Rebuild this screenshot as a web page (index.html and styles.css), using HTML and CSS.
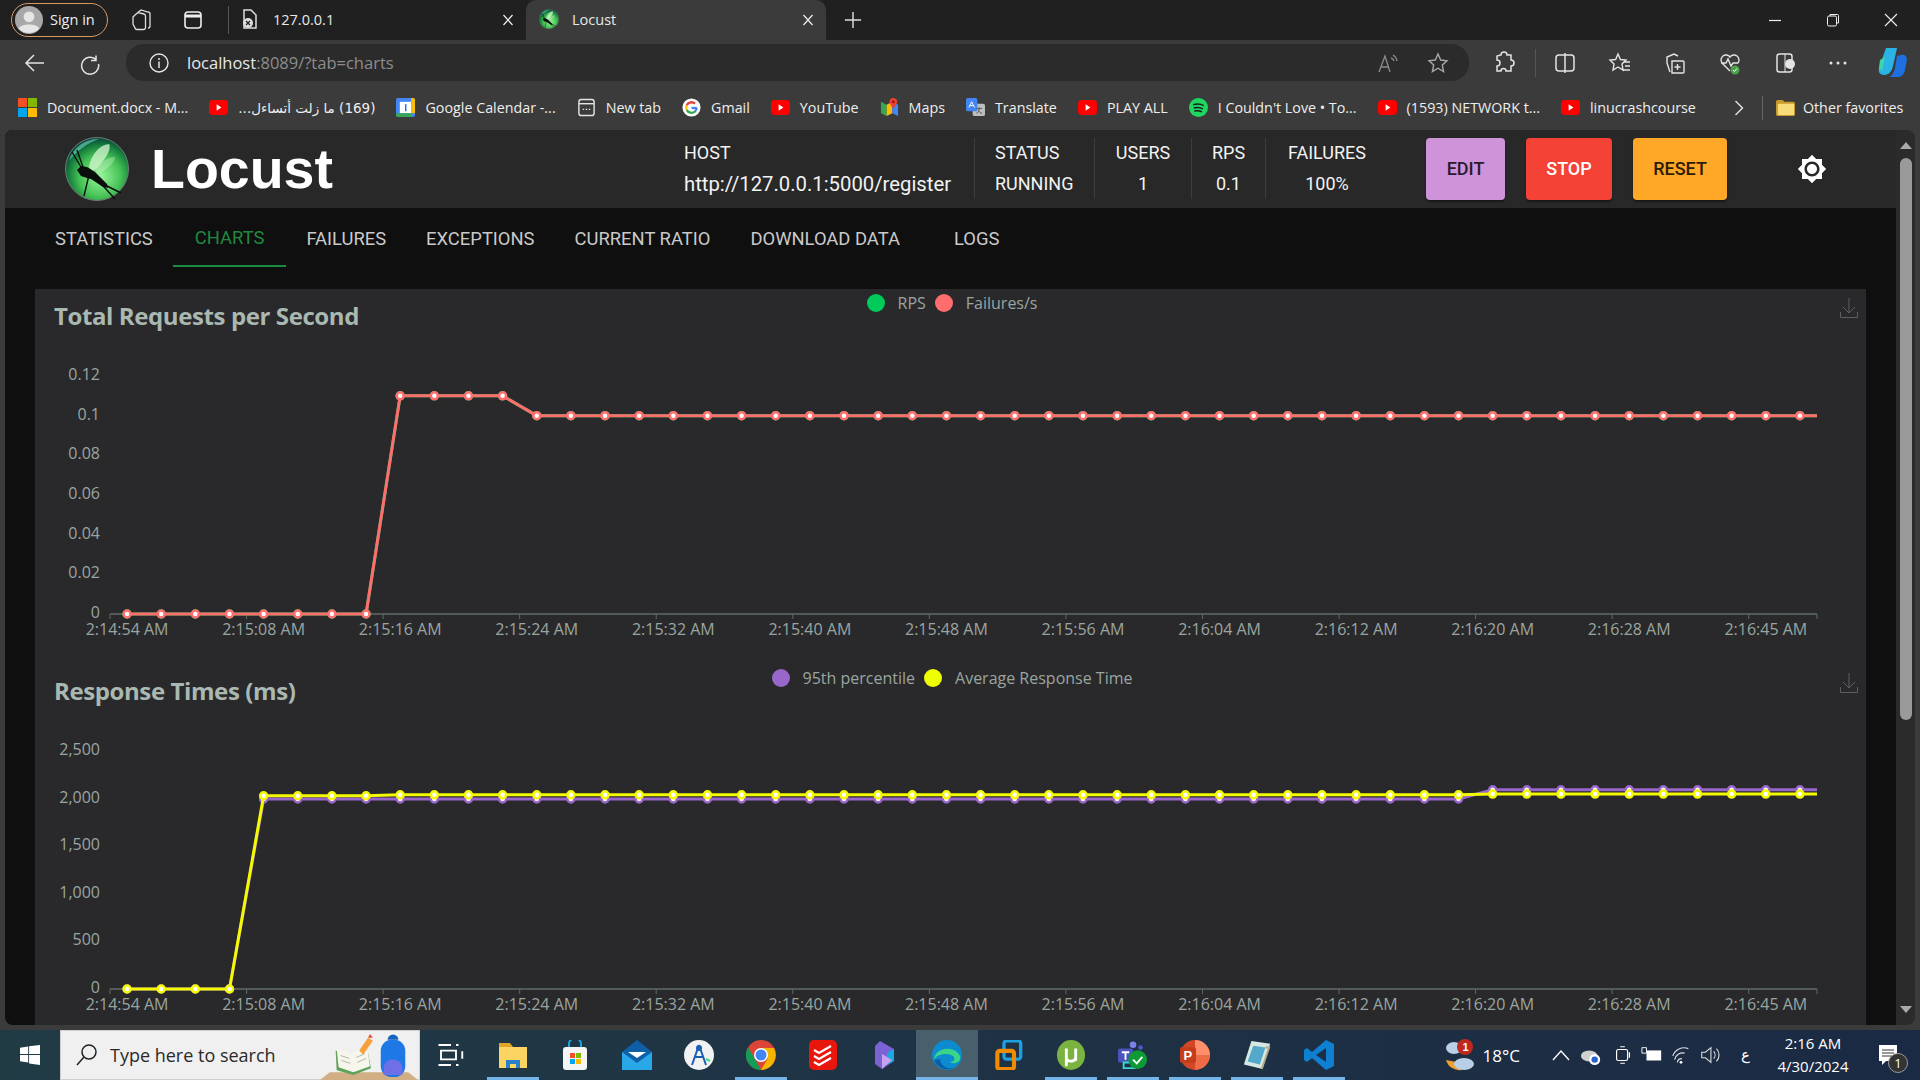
FILE: index.html
```html
<!DOCTYPE html>
<html lang="en">
<head>
    <meta charset="UTF-8">
    <title>Locust</title>
    <link rel="stylesheet" href="styles.css">
</head>
<body>
    <svg class="defs" width="0" height="0">
        <defs>
            <radialGradient id="ballGrad" cx="55%" cy="62%" r="60%">
                <stop offset="0" stop-color="#9af59a"/>
                <stop offset="0.55" stop-color="#45c255"/>
                <stop offset="0.85" stop-color="#137a3c"/>
                <stop offset="1" stop-color="#0b4a3c"/>
            </radialGradient>
        </defs>
        <symbol id="locust" viewBox="0 0 64 64">
            <circle cx="32" cy="32" r="31.5" fill="url(#ballGrad)" stroke="#6d7d78"/>
            <path d="M4 24C8 10 20 2 34 2c-12 4-22 12-30 22z" fill="#7fe3d0" opacity=".55"/>
            <path d="M24 30C26 18 34 8 44 7c3 4-4 18-16 27z" fill="#d6f5d2" opacity=".75"/>
            <path d="M30 32C36 24 44 20 50 20c0 5-8 13-17 17z" fill="#d6f5d2" opacity=".35"/>
            <path d="M12 33l4-4 6 1 8 5 12 12 1 4-5-1-12-8-4-1-6-2z" fill="#0a0f0c"/>
            <path d="M18 30L12 13M16 30L7 15M30 40l20 22M24 38l-5 21M36 46l20 10" stroke="#0a0f0c" stroke-width="1.4" fill="none"/>
        </symbol>
        <symbol id="yt" viewBox="0 0 20 20">
            <rect x="0" y="2" width="20" height="16" rx="4" fill="#f00"/>
            <path d="M8 6.500l5 3.500-5 3.500z" fill="#fff"/>
        </symbol>
        <symbol id="cross" viewBox="0 0 12 12">
            <path d="M1.500 1l9 10M10.500 1l-9 10" stroke="#eee" stroke-width="1.200"/>
        </symbol>
        <symbol id="download" viewBox="0 0 18 20">
            <path d="M.5 14v5.500h17V14M9 0v15M3 9l6 6 6-6" fill="none" stroke="#5c5f61" stroke-width="1"/>
        </symbol>
    </svg>

    <div class="tabbar">
        <div class="signin">
            <svg class="avatar" viewBox="0 0 26 26"><circle cx="13" cy="13" r="13" fill="#a8a8a8"/><circle cx="13" cy="10" r="5" fill="#e6e6e6"/><path d="M3.500 21c2-5 17-5 19 0a13 13 0 0 1-19 0z" fill="#e6e6e6"/></svg>
            <span>Sign in</span>
        </div>
        <svg class="tab-tool" viewBox="0 0 22 24"><path d="M8 4.500l3-2.500 7 2a2 2 0 0 1 2 2v12a2 2 0 0 1-2 2M5 7l3-2.500 6 1.500a2 2 0 0 1 1.500 2v12a2 2 0 0 1-2 1.500H7a2 2 0 0 1-2-1.500l-2-4V9z" fill="none" stroke="#ddd" stroke-width="1.300"/></svg>
        <svg class="tab-tool" viewBox="0 0 22 24"><rect x="3" y="4" width="16" height="16" rx="3" fill="none" stroke="#eee" stroke-width="1.600"/><path d="M3 8h16" stroke="#eee" stroke-width="3"/></svg>
        <div class="tab-sep"></div>
        <div class="tab">
            <svg class="tab-icon" viewBox="0 0 18 22"><path d="M3 2h7l5 5v13H3z" fill="none" stroke="#ddd" stroke-width="1.500"/><circle cx="7" cy="15" r="5" fill="#ddd"/><path d="M5 13l4 4M9 13l-4 4" stroke="#222" stroke-width="1.200"/></svg>
            <span class="tab-title">127.0.0.1</span>
            <svg class="tab-close"><use href="#cross"/></svg>
        </div>
        <div class="tab active">
            <svg class="tab-icon"><use href="#locust"/></svg>
            <span class="tab-title">Locust</span>
            <svg class="tab-close"><use href="#cross"/></svg>
        </div>
        <svg class="newtab" viewBox="0 0 20 20"><path d="M10 1v18M1 10h18" stroke="#ddd" stroke-width="1.600"/></svg>
        <div class="window-btns">
            <svg viewBox="0 0 14 14"><path d="M1 7.500h12" stroke="#eee" stroke-width="1.200"/></svg>
            <svg viewBox="0 0 14 14"><rect x="1.500" y="3" width="9" height="10" rx="1.500" fill="none" stroke="#eee"/><path d="M4 3V1.500h7.500a1 1 0 0 1 1 1V10H10.500" fill="none" stroke="#eee"/></svg>
            <svg viewBox="0 0 14 14"><path d="M1 1l12 12M13 1L1 13" stroke="#eee" stroke-width="1.100"/></svg>
        </div>
    </div>

    <div class="toolbar">
        <svg class="tool back" viewBox="0 0 24 24"><path d="M21 12H3M11 4l-8 8 8 8" fill="none" stroke="#e4e4e4" stroke-width="1.500"/></svg>
        <svg class="tool reload" viewBox="0 0 24 24"><path d="M18 4.500v5h-5M18.500 9A8.500 8.500 0 1 0 20.500 13" fill="none" stroke="#e4e4e4" stroke-width="1.500"/></svg>
        <div class="address">
            <svg class="tool info" viewBox="0 0 22 22"><circle cx="11" cy="11" r="9" fill="none" stroke="#e4e4e4" stroke-width="1.400"/><path d="M11 9.500V16M11 6v2" stroke="#e4e4e4" stroke-width="1.500"/></svg>
            <div class="url"><span class="url-host">localhost</span>:8089/?tab=charts</div>
            <svg class="tool read" viewBox="0 0 24 24"><path d="M3 21L9 5l5 16M5 16h7M15 7a4 4 0 0 1 3 3M17 4a8 8 0 0 1 4 6" fill="none" stroke="#8c8c8c" stroke-width="1.300"/></svg>
            <svg class="tool star" viewBox="0 0 24 24"><path d="M12 3l2.700 6 6.300.7-4.700 4.300 1.300 6.500-5.600-3.300-5.600 3.300 1.300-6.500L3 9.700 9.300 9z" fill="none" stroke="#a8a8a8" stroke-width="1.400"/></svg>
        </div>
        <svg class="tool ext" viewBox="0 0 24 24"><path d="M9 4a3 3 0 0 1 6 0h4v5a3 3 0 0 1 0 6v5h-5a2.500 2.500 0 0 0-5 0H5v-5a3 3 0 0 0 0-6V5z" fill="none" stroke="#e4e4e4" stroke-width="1.500"/></svg>
        <div class="tool-sep"></div>
        <svg class="tool split" viewBox="0 0 24 24"><rect x="3" y="4" width="18" height="16" rx="3" fill="none" stroke="#e4e4e4" stroke-width="1.500"/><path d="M12 2v20" stroke="#e4e4e4" stroke-width="1.500"/></svg>
        <svg class="tool fav" viewBox="0 0 24 24"><path d="M10 3l2.400 5.500 5.600.6-4 4 1 5.900-5-3-5 3 1-5.900-4-4 5.600-.6zM16 11h6M17 15h5M15 19h7" fill="none" stroke="#e4e4e4" stroke-width="1.400"/></svg>
        <svg class="tool coll" viewBox="0 0 24 24"><path d="M7 21l-3-9V6l7-3 4 2M9 10h11a1 1 0 0 1 1 1v10a1 1 0 0 1-1 1H9z M14.500 13v6M11.500 16h6" fill="none" stroke="#e4e4e4" stroke-width="1.400"/></svg>
        <svg class="tool health" viewBox="0 0 24 24"><path d="M12 20L4 12a5 5 0 0 1 8-6 5 5 0 0 1 8 6M3 12h5l2-4 3 7 2-3h5" fill="none" stroke="#e4e4e4" stroke-width="1.400"/><circle cx="17" cy="19" r="4.500" fill="#4aa24a"/><path d="M15 19l1.500 1.500 2.500-3" stroke="#fff" fill="none"/></svg>
        <svg class="tool side" viewBox="0 0 24 24"><rect x="4" y="3" width="15" height="18" rx="2.500" fill="none" stroke="#e4e4e4" stroke-width="1.500"/><path d="M12 3v18" stroke="#e4e4e4"/><circle cx="17" cy="13" r="5" fill="#e4e4e4"/></svg>
        <svg class="tool dots" viewBox="0 0 24 24"><circle cx="5" cy="12" r="1.500" fill="#e4e4e4"/><circle cx="12" cy="12" r="1.500" fill="#e4e4e4"/><circle cx="19" cy="12" r="1.500" fill="#e4e4e4"/></svg>
        <svg class="tool copilot" viewBox="0 0 30 34"><path d="M9 2h11l-4 18c-1 5-4 9-9 9-4 0-6-3-5-7z" fill="#2cb3e6"/><path d="M12 31h9c4 0 6-3 7-7l2-11c0-3-3-5-6-4l-4 1-2 12c-1 4-3 8-6 9z" fill="#1f6fe0"/><path d="M3 14l5-3-3 14-3-3z" fill="#3dd6a8"/></svg>
    </div>

    <div class="bookmarks">
        <div class="bm"><svg class="bm-icon" viewBox="0 0 20 20"><rect width="9.500" height="9.500" fill="#f25022"/><rect x="10.500" width="9.500" height="9.500" fill="#7fba00"/><rect y="10.500" width="9.500" height="9.500" fill="#00a4ef"/><rect x="10.500" y="10.500" width="9.500" height="9.500" fill="#ffb900"/></svg><span>Document.docx - M...</span></div>
        <div class="bm"><svg class="bm-icon"><use href="#yt"/></svg><span class="arabic" dir="rtl">(169) ما زلت أتساءل...</span></div>
        <div class="bm"><svg class="bm-icon" viewBox="0 0 20 20"><rect width="20" height="20" rx="2" fill="#4285f4"/><rect x="4" y="4" width="12" height="12" fill="#fff"/><path d="M16 0h2a2 2 0 0 1 2 2v14h-4z" fill="#fbbc04"/><path d="M0 16h16v4H2a2 2 0 0 1-2-2z" fill="#34a853"/><path d="M9 7l2-1v8H9.500V8z" fill="#1a73e8"/></svg><span>Google Calendar -...</span></div>
        <div class="bm"><svg class="bm-icon" viewBox="0 0 20 20"><rect x="2" y="1.500" width="16" height="17" rx="2.500" fill="none" stroke="#e4e4e4" stroke-width="1.500"/><path d="M2 6h16" stroke="#e4e4e4" stroke-width="1.500"/><path d="M6 12h1.500M9.200 12h1.500M12.400 12h1.500" stroke="#e4e4e4" stroke-width="1.500"/></svg><span>New tab</span></div>
        <div class="bm"><svg class="bm-icon" viewBox="0 0 20 20"><circle cx="10" cy="10" r="9.500" fill="#fff"/><path d="M15.500 10.500H10" stroke="#4285f4" stroke-width="2.400"/><path d="M15.500 10.500a5.600 5.600 0 0 1-2 3.800" stroke="#4285f4" stroke-width="2.400" fill="none"/><path d="M13.700 14.200A5.600 5.600 0 0 1 5 12.500" stroke="#34a853" stroke-width="2.400" fill="none"/><path d="M5 12.500a5.600 5.600 0 0 1 0-5" stroke="#fbbc04" stroke-width="2.400" fill="none"/><path d="M5 7.500A5.600 5.600 0 0 1 13.800 6" stroke="#ea4335" stroke-width="2.400" fill="none"/></svg><span>Gmail</span></div>
        <div class="bm"><svg class="bm-icon"><use href="#yt"/></svg><span>YouTube</span></div>
        <div class="bm"><svg class="bm-icon" viewBox="0 0 20 20"><path d="M1 4l6 3v12l-6-3z" fill="#34a853"/><path d="M7 7l6-3v12l-6 3z" fill="#fbbc04"/><path d="M13 4l6 3v12l-6-3z" fill="#4285f4"/><path d="M14 0a4 4 0 0 1 4 4c0 3-4 7-4 7s-4-4-4-7a4 4 0 0 1 4-4z" fill="#ea4335"/><circle cx="14" cy="4" r="1.500" fill="#a50e0e"/></svg><span>Maps</span></div>
        <div class="bm"><svg class="bm-icon" viewBox="0 0 20 20"><rect x="7" y="6" width="13" height="13" rx="2" fill="#bdbdbd"/><rect width="12" height="14" rx="2" fill="#4285f4"/><path d="M3 10l3-6 3 6M4 8h4" stroke="#fff" fill="none"/><path d="M11 11h6M14 10v1c0 3-2 5-3 5M13 13c1 2 2 3 4 3" stroke="#555" fill="none"/></svg><span>Translate</span></div>
        <div class="bm"><svg class="bm-icon"><use href="#yt"/></svg><span>PLAY ALL</span></div>
        <div class="bm"><svg class="bm-icon" viewBox="0 0 20 20"><circle cx="10" cy="10" r="10" fill="#1ed760"/><path d="M4.500 7c4-1 8-.7 11 1M5 10.500c3.500-.8 7-.5 9.500 1M5.500 13.700c3-.6 6-.4 8 .9" fill="none" stroke="#1b1b1b" stroke-width="1.600"/></svg><span>I Couldn't Love • To...</span></div>
        <div class="bm"><svg class="bm-icon"><use href="#yt"/></svg><span>(1593) NETWORK t...</span></div>
        <div class="bm"><svg class="bm-icon"><use href="#yt"/></svg><span>linucrashcourse</span></div>
        <svg class="bm-more" viewBox="0 0 10 18"><path d="M1.500 2l7 7-7 7" fill="none" stroke="#e4e4e4" stroke-width="1.400"/></svg>
        <div class="bm-sep"></div>
        <div class="bm other"><svg class="bm-icon" viewBox="0 0 20 20"><path d="M0 4a2 2 0 0 1 2-2h5l2 2h9a2 2 0 0 1 2 2v11a2 2 0 0 1-2 2H2a2 2 0 0 1-2-2z" fill="#c99a2e"/><rect x="2" y="6" width="17" height="12" rx="1" fill="#f7dc7a"/></svg><span>Other favorites</span></div>
    </div>

    <div class="page">
        <div class="app">
            <header class="topbar">
                <div class="brand">
                    <svg class="brand-logo"><use href="#locust"/></svg>
                    <span class="brand-name">Locust</span>
                </div>
                <div class="stat stat-left host">
                    <div>HOST</div>
                    <div class="host-url">http://127.0.0.1:5000/register</div>
                </div>
                <div class="stat stat-left status">
                    <div>STATUS</div>
                    <div>RUNNING</div>
                </div>
                <div class="stat users">
                    <div>USERS</div>
                    <div>1</div>
                </div>
                <div class="stat rps">
                    <div>RPS</div>
                    <div>0.1</div>
                </div>
                <div class="stat failures">
                    <div>FAILURES</div>
                    <div>100%</div>
                </div>
                <div class="actions">
                    <button class="btn btn-edit">EDIT</button>
                    <button class="btn btn-stop">STOP</button>
                    <button class="btn btn-reset">RESET</button>
                </div>
                <svg class="theme-icon" viewBox="0 0 24 24"><path d="M20 8.690V4h-4.690L12 .690 8.690 4H4v4.690L.690 12 4 15.310V20h4.690L12 23.310 15.310 20H20v-4.690L23.310 12 20 8.690zM12 18c-3.310 0-6-2.690-6-6s2.690-6 6-6 6 2.690 6 6-2.690 6-6 6zm0-10c-2.210 0-4 1.790-4 4s1.790 4 4 4 4-1.790 4-4-1.790-4-4-4z" fill="#fff"/></svg>
            </header>

            <nav class="tabs">
                <a class="tab-link">STATISTICS</a>
                <a class="tab-link current">CHARTS</a>
                <a class="tab-link">FAILURES</a>
                <a class="tab-link">EXCEPTIONS</a>
                <a class="tab-link">CURRENT RATIO</a>
                <a class="tab-link">DOWNLOAD DATA</a>
                <a class="tab-link logs">LOGS</a>
            </nav>

            <main class="charts">
                <section class="chart">
                    <div class="chart-head">
                        <h2>Total Requests per Second</h2>
                        <div class="legend">
                            <span class="legend-dot dot-green"></span><span>RPS</span>
                            <span class="legend-dot dot-red"></span><span>Failures/s</span>
                        </div>
                        <svg class="save-icon"><use href="#download"/></svg>
                    </div>
                    <svg class="plot" id="rpsPlot" viewBox="0 0 1831 320"></svg>
                </section>
                <section class="chart">
                    <div class="chart-head">
                        <h2>Response Times (ms)</h2>
                        <div class="legend">
                            <span class="legend-dot dot-purple"></span><span>95th percentile</span>
                            <span class="legend-dot dot-yellow"></span><span>Average Response Time</span>
                        </div>
                        <svg class="save-icon"><use href="#download"/></svg>
                    </div>
                    <svg class="plot" id="timesPlot" viewBox="0 0 1831 320"></svg>
                </section>
            </main>
        </div>
        <div class="scrollbar">
            <span class="arrow-up"></span>
            <div class="thumb"></div>
            <span class="arrow-down"></span>
        </div>
    </div>

    <div class="taskbar">
        <svg class="start" viewBox="0 0 22 22"><path d="M0 3l9-1.300V10H0zM10 1.500L22 0v10H10zM0 11h9v8.300L0 18zM10 11h12v11l-12-1.700z" fill="#fff"/></svg>
        <div class="search">
            <svg class="search-glass" viewBox="0 0 24 24"><circle cx="14" cy="9" r="7" fill="none" stroke="#222" stroke-width="1.500"/><path d="M9 14l-7 8" stroke="#222" stroke-width="1.500"/></svg>
            <span>Type here to search</span>
            <svg class="search-art" viewBox="0 0 100 50">
                <path d="M0 50l10-8h80l10 8z" fill="#d2ae85"/>
                <path d="M16 20l15 5 17-8 4 21-18 7-17-5z" fill="#5fa35a"/>
                <path d="M17 18l15 5 16-8 3 21-17 6-15-5z" fill="#f6f6ec"/>
                <path d="M21 25l9 3M22 30l9 3M37 27l9-4M38 32l9-4" stroke="#b5b5a8"/>
                <path d="M40 20l9-13 5 3-10 14z" fill="#f5a03c"/>
                <path d="M49 7l2-4 3 4z" fill="#e0503c"/>
                <rect x="62" y="9" width="25" height="38" rx="11" fill="#1e79e6"/>
                <path d="M69 9a5.500 5.500 0 0 1 11 0z" fill="#1565c0"/>
                <path d="M65 36a10 10 0 0 1 19 0v9H65z" fill="#6f6fe8"/>
            </svg>
        </div>
        <div class="task-item">
            <svg viewBox="0 0 24 24"><path d="M2 4h10M16 4h2M2 20h10M16 20h2M21 9v6M4 8.500h12v7H4z" fill="none" stroke="#fff" stroke-width="1.500"/></svg>
        </div>
        <div class="task-item open">
            <svg viewBox="0 0 30 28"><path d="M1 2h11l3 4H1z" fill="#e0a526"/><rect x="1" y="6" width="28" height="21" fill="#fcd462"/><path d="M8 27v-8h14v8h-4v-4h-6v4z" fill="#2a7fc9"/></svg>
        </div>
        <div class="task-item">
            <svg viewBox="0 0 30 30"><path d="M9 8V4a6 6 0 0 1 12 0v4" fill="none" stroke="#1aa3e0" stroke-width="2"/><rect x="3" y="7" width="24" height="23" rx="3" fill="#f5f5f5"/><rect x="10" y="13" width="5" height="5" fill="#f25022"/><rect x="16" y="13" width="5" height="5" fill="#7fba00"/><rect x="10" y="19" width="5" height="5" fill="#00a4ef"/><rect x="16" y="19" width="5" height="5" fill="#ffb900"/></svg>
        </div>
        <div class="task-item">
            <svg viewBox="0 0 30 30"><path d="M0 12L15 0l15 12v18H0z" fill="#0f5ea8"/><path d="M0 12l15 11 15-11v18H0z" fill="#29a8e8"/><path d="M6 12h18l-9 6z" fill="#fff"/></svg>
        </div>
        <div class="task-item">
            <svg viewBox="0 0 30 30"><circle cx="15" cy="15" r="15" fill="#f2f2f2"/><path d="M15 5l-7 20M15 5l7 20M10 17h10" stroke="#1a5fb4" stroke-width="2" fill="none"/><circle cx="15" cy="8" r="3" fill="#1a5fb4"/><path d="M22 19l4 2" stroke="#3ddc84" stroke-width="2"/></svg>
        </div>
        <div class="task-item open">
            <svg viewBox="0 0 30 30"><circle cx="15" cy="15" r="15" fill="#db4437"/><path d="M15 30A15 15 0 0 1 2 7.500l8 13.500z" fill="#0f9d58"/><path d="M15 8h13a15 15 0 0 1-13 22l7-12z" fill="#f4b400"/><circle cx="15" cy="15" r="7" fill="#fff"/><circle cx="15" cy="15" r="5.500" fill="#4285f4"/></svg>
        </div>
        <div class="task-item">
            <svg viewBox="0 0 30 30"><rect x="1" width="28" height="30" rx="5" fill="#e9160d"/><path d="M6 10l5 3 12-7M6 16l5 3 12-7M6 22l5 3 12-7" fill="none" stroke="#fff" stroke-width="2.200"/></svg>
        </div>
        <div class="task-item">
            <svg viewBox="0 0 30 30"><path d="M10 1l14 8v12L12 29 5 24V6z" fill="#7b63d6"/><path d="M24 9v12l-7 4V13z" fill="#1aa8e0"/><path d="M12 14l10 6-10 9z" fill="#c8a0f0"/></svg>
        </div>
        <div class="task-item edge open-active">
            <svg viewBox="0 0 30 30"><circle cx="15" cy="15" r="15" fill="#0c8ccf"/><path d="M2 20C2 8 22 4 28 16c2 6-6 9-10 6 4 0 6-3 3-6-5-4-17-2-19 4z" fill="#38d58a"/><path d="M8 19c0 6 7 11 14 9a15 15 0 0 1-20-8z" fill="#0a5da8"/></svg>
        </div>
        <div class="task-item">
            <svg viewBox="0 0 30 36"><rect x="9" y="1" width="20" height="22" rx="3" fill="none" stroke="#1ba1e2" stroke-width="4"/><rect x="1" y="13" width="20" height="22" rx="3" fill="none" stroke="#f08a00" stroke-width="5"/></svg>
        </div>
        <div class="task-item open">
            <svg viewBox="0 0 30 32"><ellipse cx="15" cy="16" rx="15" ry="16" fill="#7bb340"/><path d="M10 9v9c0 6 9 6 10 1V9M20 9v13M10 18v10" fill="none" stroke="#fff" stroke-width="3"/></svg>
        </div>
        <div class="task-item open">
            <svg viewBox="0 0 32 32"><circle cx="16" cy="5" r="3.500" fill="#7b83eb"/><circle cx="24" cy="8" r="2.500" fill="#5059c9"/><rect x="0" y="9" width="16" height="15" rx="2" fill="#4b53bc"/><path d="M4 13h8M8 13v8" stroke="#fff" stroke-width="2"/><path d="M6 24h12v6H6z" fill="none" stroke="#3dd6d0" stroke-width="2"/><circle cx="21" cy="21" r="10" fill="#0e9b35"/><path d="M16 21l4 4 6-7" fill="none" stroke="#fff" stroke-width="2"/></svg>
        </div>
        <div class="task-item open">
            <svg viewBox="0 0 30 30"><circle cx="15" cy="15" r="15" fill="#d24726"/><path d="M15 0a15 15 0 0 1 15 15H15z" fill="#ff8f6b"/><path d="M15 15h15a15 15 0 0 1-15 15z" fill="#ed6c47"/><rect x="0" y="7" width="16" height="16" rx="2" fill="#c43e1c"/><text x="3.500" y="20" class="ppt-p">P</text></svg>
        </div>
        <div class="task-item open">
            <svg viewBox="0 0 30 32"><path d="M9 1l20 3-8 27-20-5z" fill="#d6e8e2"/><path d="M11 6l13 2-6 18-13-3z" fill="#54a8c9"/><path d="M24 8l4 0-8 23" fill="none" stroke="#b5a989" stroke-width="2"/></svg>
        </div>
        <div class="task-item open">
            <svg viewBox="0 0 30 30"><path d="M22 0l8 4v22l-8 4-14-12-5 4-3-2V10l3-2 5 4zM22 8L12 15l10 7z" fill="#0e7fd1" fill-rule="evenodd"/></svg>
        </div>
        <div class="tray">
            <svg class="tray-weather" viewBox="0 0 32 34"><ellipse cx="10" cy="10" rx="8" ry="6" fill="#b9cfe8"/><circle cx="21" cy="9" r="8" fill="#c0281e"/><text x="18.500" y="13" class="weather-n">1</text><path d="M2 22a14 14 0 0 0 16 10l-6-8z" fill="#f0a030"/><ellipse cx="20" cy="26" rx="10" ry="6" fill="#b9cfe8"/></svg>
            <span class="temp">18°C</span>
            <svg class="tray-chev" viewBox="0 0 18 12"><path d="M1 11l8-9 8 9" fill="none" stroke="#fff" stroke-width="1.300"/></svg>
            <svg class="tray-ico tray-cloud" viewBox="0 0 24 24"><ellipse cx="10" cy="13" rx="9" ry="6" fill="#d0d0d0"/><circle cx="16" cy="17" r="6" fill="#fff"/><circle cx="16" cy="17" r="3.500" fill="#2a63c4"/></svg>
            <svg class="tray-ico" viewBox="0 0 24 24"><rect x="5" y="6" width="12" height="12" rx="2" fill="none" stroke="#fff" stroke-width="1.300"/><path d="M19 9v6M9 3h5M9 21h5" stroke="#fff" stroke-width="1.300"/></svg>
            <svg class="tray-ico" viewBox="0 0 24 24"><rect x="6" y="7" width="16" height="11" fill="#fff"/><path d="M1 4h5v6H1z" fill="none" stroke="#fff"/></svg>
            <svg class="tray-ico" viewBox="0 0 24 24"><path d="M3 13a13 13 0 0 1 17-8M5 17a9 9 0 0 1 11-7M8 20a5 5 0 0 1 5-4" fill="none" stroke="#ddd" stroke-width="1.300"/><circle cx="12" cy="20" r="1.500" fill="#fff"/></svg>
            <svg class="tray-ico tray-sound" viewBox="0 0 24 24"><path d="M3 9h4l6-5v16l-6-5H3zM16 8a6 6 0 0 1 0 8M19 5a10 10 0 0 1 0 14" fill="none" stroke="#ddd" stroke-width="1.200"/></svg>
            <span class="lang">ع</span>
            <div class="clock">
                <div>2:16 AM</div>
                <div>4/30/2024</div>
            </div>
            <div class="notify">
                <svg viewBox="0 0 20 20"><path d="M1 0h18v16H8l-4 4v-4H1z" fill="#fff"/><path d="M4 5h12M4 8h12M4 11h12" stroke="#333"/></svg>
                <span class="notify-count">1</span>
            </div>
        </div>
    </div>

    <script src="charts.js"></script>
</body>
</html>
```
FILE: styles.css
```css
* {
    box-sizing: border-box;
}
body {
    margin: 0;
    width: 1920px;
    height: 1080px;
    overflow: hidden;
    background-color: #3b3b3b;
    font-family: "Open Sans", "DejaVu Sans", sans-serif;
    color: #eee;
    display: flex;
    flex-direction: column;
}
.defs {
    position: absolute;
}

/* browser chrome */
.tabbar {
    height: 40px;
    flex: none;
    background-color: #202020;
    display: flex;
    align-items: center;
    padding-left: 11px;
    font-size: 14.5px;
}
.signin {
    width: 97px;
    height: 34px;
    border: 1px solid #d89a62;
    border-radius: 17px;
    display: flex;
    align-items: center;
    padding-left: 3px;
    gap: 7px;
    color: #eee;
    padding-bottom: 1px;
}
.avatar {
    width: 28px;
    height: 28px;
}
.tab-tool {
    width: 22px;
    height: 24px;
    margin-left: 22px;
}
.tab-tool + .tab-tool {
    margin-left: 30px;
}
.tab-sep {
    width: 1px;
    height: 28px;
    background-color: #555;
    margin-left: 24px;
}
.tab {
    width: 297px;
    height: 40px;
    display: flex;
    align-items: center;
    padding: 0 12px 2px 11px;
    gap: 13px;
}
.tab.active {
    background-color: #3b3b3b;
    border-radius: 10px 10px 0 0;
    width: 300px;
    padding-left: 13px;
}
.tab-icon {
    width: 20px;
    height: 22px;
    flex: none;
}
.tab-title {
    flex: 1;
    color: #e8e8e8;
}
.tab-close {
    width: 12px;
    height: 12px;
    margin-top: 2px;
}
.newtab {
    width: 18px;
    height: 18px;
    margin-left: 18px;
}
.window-btns {
    margin-left: auto;
    display: flex;
    gap: 44px;
    padding-right: 22px;
}
.window-btns svg {
    width: 14px;
    height: 14px;
}

.toolbar {
    height: 45px;
    flex: none;
    display: flex;
    align-items: center;
    padding: 0 12px 0 23px;
}
.tool {
    width: 24px;
    height: 24px;
    flex: none;
}
.reload {
    margin-left: 31px;
}
.address {
    width: 1343px;
    height: 37px;
    margin-left: 24px;
    background-color: #2b2b2b;
    border-radius: 18px;
    display: flex;
    align-items: center;
    padding: 0 19px 0 22px;
}
.info {
    width: 22px;
    height: 22px;
}
.url {
    flex: 1;
    margin-left: 17px;
    font-size: 16.5px;
    color: #8d8d8d;
}
.url-host {
    color: #e8e8e8;
}
.read {
    margin-right: 1px;
}
.star {
    margin-left: 25px;
}
.ext {
    margin-left: 23px;
}
.tool-sep {
    width: 1px;
    height: 28px;
    background-color: #555;
    margin-left: 19px;
}
.split {
    margin-left: 17px;
}
.fav, .coll, .health, .side {
    margin-left: 31px;
}
.dots {
    margin-left: 29px;
}
.copilot {
    width: 30px;
    height: 34px;
    margin-left: 27px;
}

.bookmarks {
    height: 45px;
    flex: none;
    display: flex;
    align-items: center;
    padding-left: 18px;
    font-size: 14.3px;
    color: #eee;
}
.bm {
    display: flex;
    align-items: center;
    gap: 10px;
    margin-right: 21px;
    white-space: nowrap;
}
.bm-icon {
    width: 19px;
    height: 19px;
    flex: none;
}
.arabic {
    font-family: "DejaVu Sans", sans-serif;
    font-size: 13.5px;
}
.bm-more {
    width: 10px;
    height: 18px;
    margin-left: 17px;
}
.bm-sep {
    width: 1px;
    height: 24px;
    background-color: #666;
    margin-left: 18px;
    margin-right: 13px;
}
.bm.other {
    gap: 8px;
    margin-right: 0;
}

/* locust page */
.page {
    flex: 1;
    min-height: 0;
    margin: 0 5px 5px 5px;
    border-radius: 8px;
    overflow: hidden;
    display: flex;
    background-color: #2b2b2b;
}
.app {
    width: 1891px;
    background-color: #0f0f0f;
    overflow: hidden;
    font-family: Roboto, sans-serif;
}
.topbar {
    height: 78px;
    background-color: #282828;
    display: flex;
    align-items: center;
}
.brand {
    width: 679px;
    padding-left: 60px;
    display: flex;
    align-items: center;
    gap: 22px;
}
.brand-logo {
    width: 64px;
    height: 64px;
}
.brand-name {
    font-family: "Liberation Sans", Arial, sans-serif;
    font-weight: bold;
    font-size: 55.5px;
    color: #fff;
}
.stat {
    height: 61px;
    margin-bottom: 1px;
    padding: 0 20px;
    border-left: 1px solid #3d3d3d;
    display: flex;
    flex-direction: column;
    justify-content: space-between;
    text-align: center;
    font-size: 18px;
    line-height: 30px;
    color: #f2f2f2;
    white-space: nowrap;
}
.stat-left {
    text-align: left;
}
.host {
    border-left: none;
    padding-left: 0;
    width: 290px;
}
.host-url {
    font-size: 20.3px;
}
.status {
    width: 120px;
}
.users {
    width: 97px;
}
.rps {
    width: 74px;
}
.failures {
    width: 123px;
}
.actions {
    display: flex;
    gap: 21px;
    margin-left: 38px;
}
.btn {
    height: 62px;
    padding: 0 0 2px;
    border: none;
    border-radius: 4px;
    font-family: Roboto, sans-serif;
    font-weight: 500;
    font-size: 18px;
    box-shadow: 0 2px 2px rgba(0, 0, 0, 0.4);
}
.btn-edit {
    width: 79px;
    background-color: #ce93d8;
    color: #2a1a2e;
}
.btn-stop {
    width: 86px;
    background-color: #f44336;
    color: #fff;
}
.btn-reset {
    width: 94px;
    background-color: #ffa726;
    color: #2b1c05;
}
.theme-icon {
    width: 30px;
    height: 30px;
    margin-left: 70px;
}

.tabs {
    height: 81px;
    display: flex;
    padding-left: 30px;
    padding-bottom: 22px;
}
.tab-link {
    padding: 2px 20px 0;
    display: flex;
    align-items: center;
    height: 59px;
    font-size: 18.4px;
    font-weight: 400;
    color: #c9c9c9;
    white-space: nowrap;
}
.tab-link.current {
    color: #1f8a3f;
    padding: 2px 22px 0;
    border-bottom: 2px solid #1b8a3e;
}
.tab-link.logs {
    margin-left: 14px;
}

.charts {
    margin: 0 30px;
    background-color: #29292b;
}
.chart {
    height: 375px;
    font-family: "Open Sans", sans-serif;
    color: #9aa5a0;
}
.chart-head {
    height: 55px;
    display: grid;
    grid-template-columns: 1fr auto 1fr;
}
.chart-head h2 {
    margin: 7px 0 0 19px;
    font-size: 24px;
    line-height: 40px;
    font-weight: 700;
    color: #a9b8b1;
    letter-spacing: -0.4px;
}
.legend {
    height: 28px;
    margin-left: 3px;
    display: flex;
    align-items: center;
    font-size: 16px;
}
.legend-dot {
    width: 18px;
    height: 18px;
    border-radius: 50%;
    margin-right: 13px;
}
.legend-dot + span {
    margin-right: 9px;
}
.legend span:last-child {
    margin-right: 0;
}
.dot-green {
    background-color: #00ca5a;
}
.dot-red {
    background-color: #ff6d6d;
}
.dot-purple {
    background-color: #9966cc;
}
.dot-yellow {
    background-color: #eeff00;
}
.save-icon {
    width: 18px;
    height: 20px;
    justify-self: end;
    margin: 9px 8px 0 0;
}
.plot {
    display: block;
    width: 1831px;
    height: 320px;
}
.plot text {
    font-family: "Open Sans", sans-serif;
    font-size: 16px;
    fill: #9aa5a0;
}

.scrollbar {
    width: 19px;
    position: relative;
    display: flex;
    flex-direction: column;
    align-items: center;
    padding-top: 12px;
}
.arrow-up {
    width: 0;
    height: 0;
    border-left: 6px solid transparent;
    border-right: 6px solid transparent;
    border-bottom: 7px solid #aaa;
}
.thumb {
    width: 12px;
    height: 562px;
    margin-top: 9px;
    border-radius: 6px;
    background-color: #9a9a9a;
}
.arrow-down {
    width: 0;
    height: 0;
    margin-top: auto;
    margin-bottom: 12px;
    border-left: 6px solid transparent;
    border-right: 6px solid transparent;
    border-top: 7px solid #aaa;
}

/* windows taskbar */
.taskbar {
    height: 50px;
    flex: none;
    background: linear-gradient(90deg, #213b45, #1b2a44);
    display: flex;
    align-items: center;
}
.start {
    width: 20px;
    height: 20px;
    margin: 0 20px;
    flex: none;
}
.search {
    width: 360px;
    height: 50px;
    flex: none;
    background-color: #f0f0f0;
    border: 1px solid #cfcfcf;
    display: flex;
    align-items: center;
    color: #2a2a2a;
    font-size: 18px;
    padding-left: 14px;
}
.search-glass {
    width: 24px;
    height: 24px;
    margin-right: 11px;
}
.search span {
    flex: 1;
}
.search-art {
    width: 100px;
    height: 49px;
}
.task-item {
    width: 62px;
    height: 50px;
    flex: none;
    display: flex;
    align-items: center;
    justify-content: center;
    position: relative;
}
.task-item svg {
    width: 30px;
    height: 30px;
}
.task-item.open::after {
    content: "";
    position: absolute;
    left: 5px;
    right: 5px;
    bottom: 0;
    height: 3px;
    background-color: #74b4e8;
}
.task-item.open-active {
    background-color: #47606b;
}
.task-item.open-active::after {
    content: "";
    position: absolute;
    left: 0;
    right: 0;
    bottom: 0;
    height: 3px;
    background-color: #74b4e8;
}
.ppt-p {
    font-family: "Liberation Sans", sans-serif;
    font-size: 13px;
    font-weight: bold;
    fill: #fff;
}
.weather-n {
    font-family: "Liberation Sans", sans-serif;
    font-size: 11px;
    font-weight: bold;
    fill: #fff;
}
.tray {
    margin-left: auto;
    display: flex;
    align-items: center;
    color: #fff;
}
.tray-weather {
    width: 32px;
    height: 34px;
}
.temp {
    font-size: 17px;
    margin-left: 7px;
    margin-right: 32px;
}
.tray-chev {
    width: 18px;
    height: 12px;
    margin-right: 10px;
}
.tray-ico {
    width: 22px;
    height: 22px;
    margin-right: 7px;
}
.tray-cloud {
    margin-right: 10px;
}
.tray-sound {
    margin-right: 6px;
}
.lang {
    font-family: "DejaVu Sans", sans-serif;
    font-size: 15px;
    margin: 0 18px 0 14px;
}
.clock {
    width: 90px;
    text-align: center;
    font-size: 15px;
    line-height: 23px;
}
.notify {
    width: 50px;
    height: 50px;
    margin-left: 12px;
    position: relative;
    display: flex;
    align-items: center;
    padding-left: 8px;
}
.notify svg {
    width: 20px;
    height: 22px;
}
.notify-count {
    position: absolute;
    left: 18px;
    top: 23px;
    width: 20px;
    height: 20px;
    border-radius: 50%;
    background-color: #333;
    border: 1px solid #999;
    font-size: 13px;
    line-height: 18px;
    text-align: center;
}
```
FILE: charts.js
```js
const axisY = 270;
const axisLeft = 75;
const axisRight = 1782;
const step = 34.14;
const plotHeight = 238;

const times = ['2:14:54 AM', '2:15:08 AM', '2:15:16 AM', '2:15:24 AM', '2:15:32 AM', '2:15:40 AM', '2:15:48 AM',
    '2:15:56 AM', '2:16:04 AM', '2:16:12 AM', '2:16:20 AM', '2:16:28 AM', '2:16:45 AM'];

function pointX(i) {
    return axisLeft + step / 2 + step * i;
}

function drawChart(svg, maxValue, yLabels, series) {
    const toY = value => axisY - value / maxValue * plotHeight;
    let html = '';

    yLabels.forEach(([value, label]) => {
        html += `<text x="65" y="${toY(value) + 4}" text-anchor="end">${label}</text>`;
    });

    html += `<path d="M${axisLeft} ${axisY}H${axisRight}" stroke="#5f6b66" stroke-width="1.5"/>`;
    for (let i = 0; i <= 12; i++) {
        const x = axisLeft + step * 4 * i;
        html += `<path d="M${x} ${axisY}v5" stroke="#5f6b66"/>`;
    }
    html += `<path d="M${axisRight} ${axisY}v5" stroke="#5f6b66"/>`;

    times.forEach((time, i) => {
        html += `<text x="${pointX(i * 4)}" y="${axisY + 21}" text-anchor="middle">${time}</text>`;
    });

    series.forEach(({ color, values }) => {
        const points = values.map((value, i) => `${pointX(i)},${toY(value)}`);
        points.push(`${axisRight},${toY(values[values.length - 1])}`);
        html += `<polyline points="${points.join(' ')}" fill="none" stroke="${color}" stroke-width="3"/>`;
        values.forEach((value, i) => {
            html += `<circle cx="${pointX(i)}" cy="${toY(value)}" r="3.5" fill="#fff" stroke="${color}" stroke-width="2.5"/>`;
        });
    });

    svg.innerHTML = html;
}

const failures = [];
const average = [];
const percentile = [];
for (let i = 0; i < 50; i++) {
    failures.push(i < 8 ? 0 : i < 12 ? 0.11 : 0.1);
    average.push(i < 4 ? 0 : i < 8 ? 2030 : i < 40 ? 2040 : 2048);
    percentile.push(i < 4 ? 0 : i < 40 ? 1996 : 2093);
}

drawChart(document.getElementById('rpsPlot'), 0.12,
    [[0, '0'], [0.02, '0.02'], [0.04, '0.04'], [0.06, '0.06'], [0.08, '0.08'], [0.1, '0.1'], [0.12, '0.12']],
    [{ color: '#00ca5a', values: failures }, { color: '#ff6d6d', values: failures }]);

drawChart(document.getElementById('timesPlot'), 2500,
    [[0, '0'], [500, '500'], [1000, '1,000'], [1500, '1,500'], [2000, '2,000'], [2500, '2,500']],
    [{ color: '#9966cc', values: percentile }, { color: '#f4fa00', values: average }]);
```
